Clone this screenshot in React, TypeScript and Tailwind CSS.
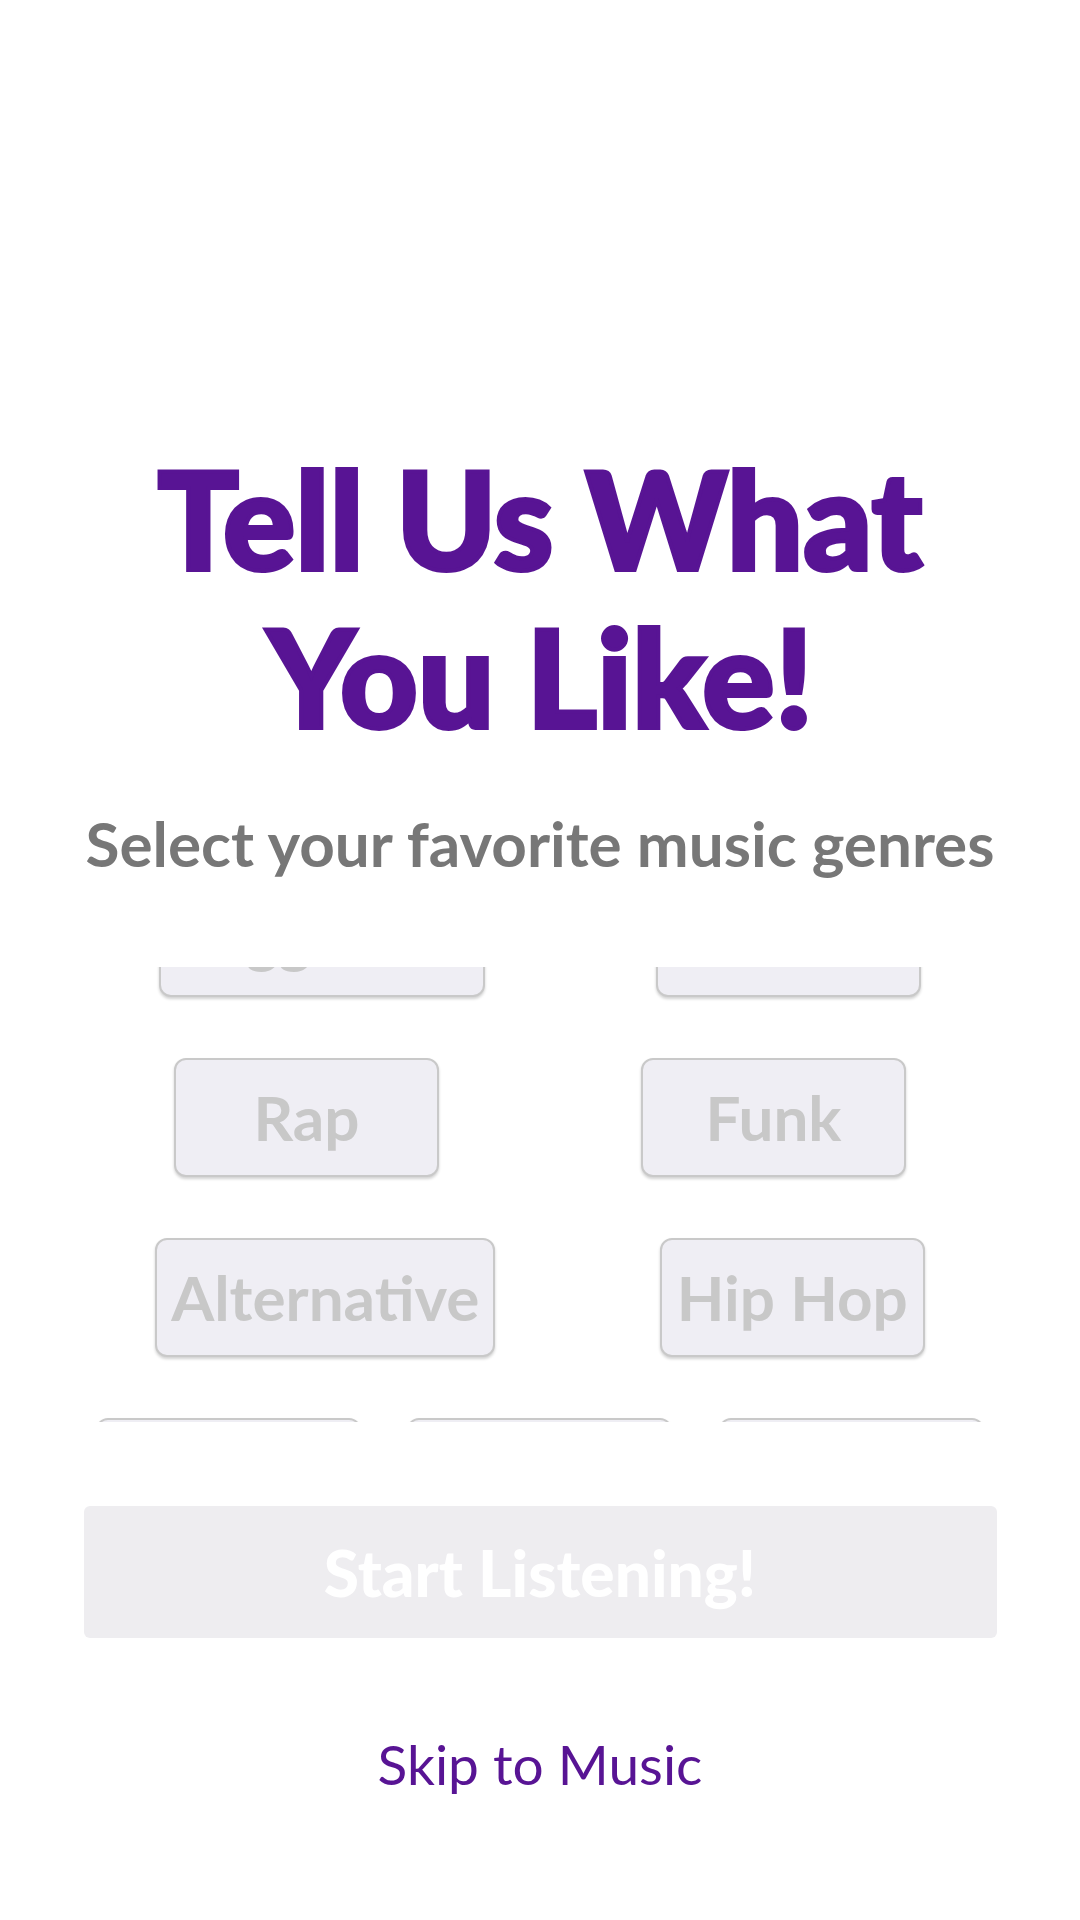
import { useState } from 'react';

const rows: string[][] = [
  ['Reggaeton', 'Jazz'],
  ['Rap', 'Funk'],
  ['Alternative', 'Hip Hop'],
  ['Country', 'Pop', 'Rock'],
  ['Blues', 'Indie'],
];

function GenreButton({ label, selected, onToggle }: { label: string; selected: boolean; onToggle: () => void }) {
  return (
    <button
      onClick={onToggle}
      className={`h-[119px] min-w-[265px] px-[14px] rounded-[12px] border-2 border-[#c9c9c9] bg-[#efeef4] shadow-[0_2px_3px_rgba(0,0,0,0.18)] text-[62px] leading-[75px] font-bold whitespace-nowrap ${
        selected ? 'text-[#581494]' : 'text-[#c8c8c8]'
      }`}
    >
      {label}
    </button>
  );
}

export default function App() {
  const [selected, setSelected] = useState<string[]>([]);

  const toggle = (genre: string) => {
    setSelected((prev) => (prev.includes(genre) ? prev.filter((g) => g !== genre) : [...prev, genre]));
  };

  return (
    <div className="w-[1080px] h-[1920px] bg-white flex flex-col items-center pt-[439px] font-['Lato','Liberation_Sans',sans-serif]">
      {/* Heading */}
      <h1 className="text-[135px] leading-[158px] font-black text-[#581494] text-center w-[820px] [-webkit-text-stroke:4px_#581494]">
        Tell Us What You Like!
      </h1>
      <p className="mt-[51px] text-[62px] leading-[74px] font-bold text-[#777777] text-center whitespace-nowrap">
        Select your favorite music genres
      </p>

      {/* Genre list (scrolled) */}
      <div className="mt-[87px] w-full h-[455px] overflow-hidden">
        <div className="-mt-[89px] flex flex-col gap-[61px] px-[73px]">
          {rows.map((row, i) => (
            <div key={i} className="flex justify-around">
              {row.map((g) => (
                <GenreButton key={g} label={g} selected={selected.includes(g)} onToggle={() => toggle(g)} />
              ))}
            </div>
          ))}
        </div>
      </div>

      {/* Actions */}
      <button
        disabled={selected.length === 0}
        className="mt-[84px] w-[913px] h-[132px] rounded-[6px] bg-[#eeedf0] text-white text-[64px] leading-[77px] font-black"
      >
        Start Listening!
      </button>
      <button className="mt-[93px] text-[55px] leading-[66px] text-[#581494]">Skip to Music</button>
    </div>
  );
}
